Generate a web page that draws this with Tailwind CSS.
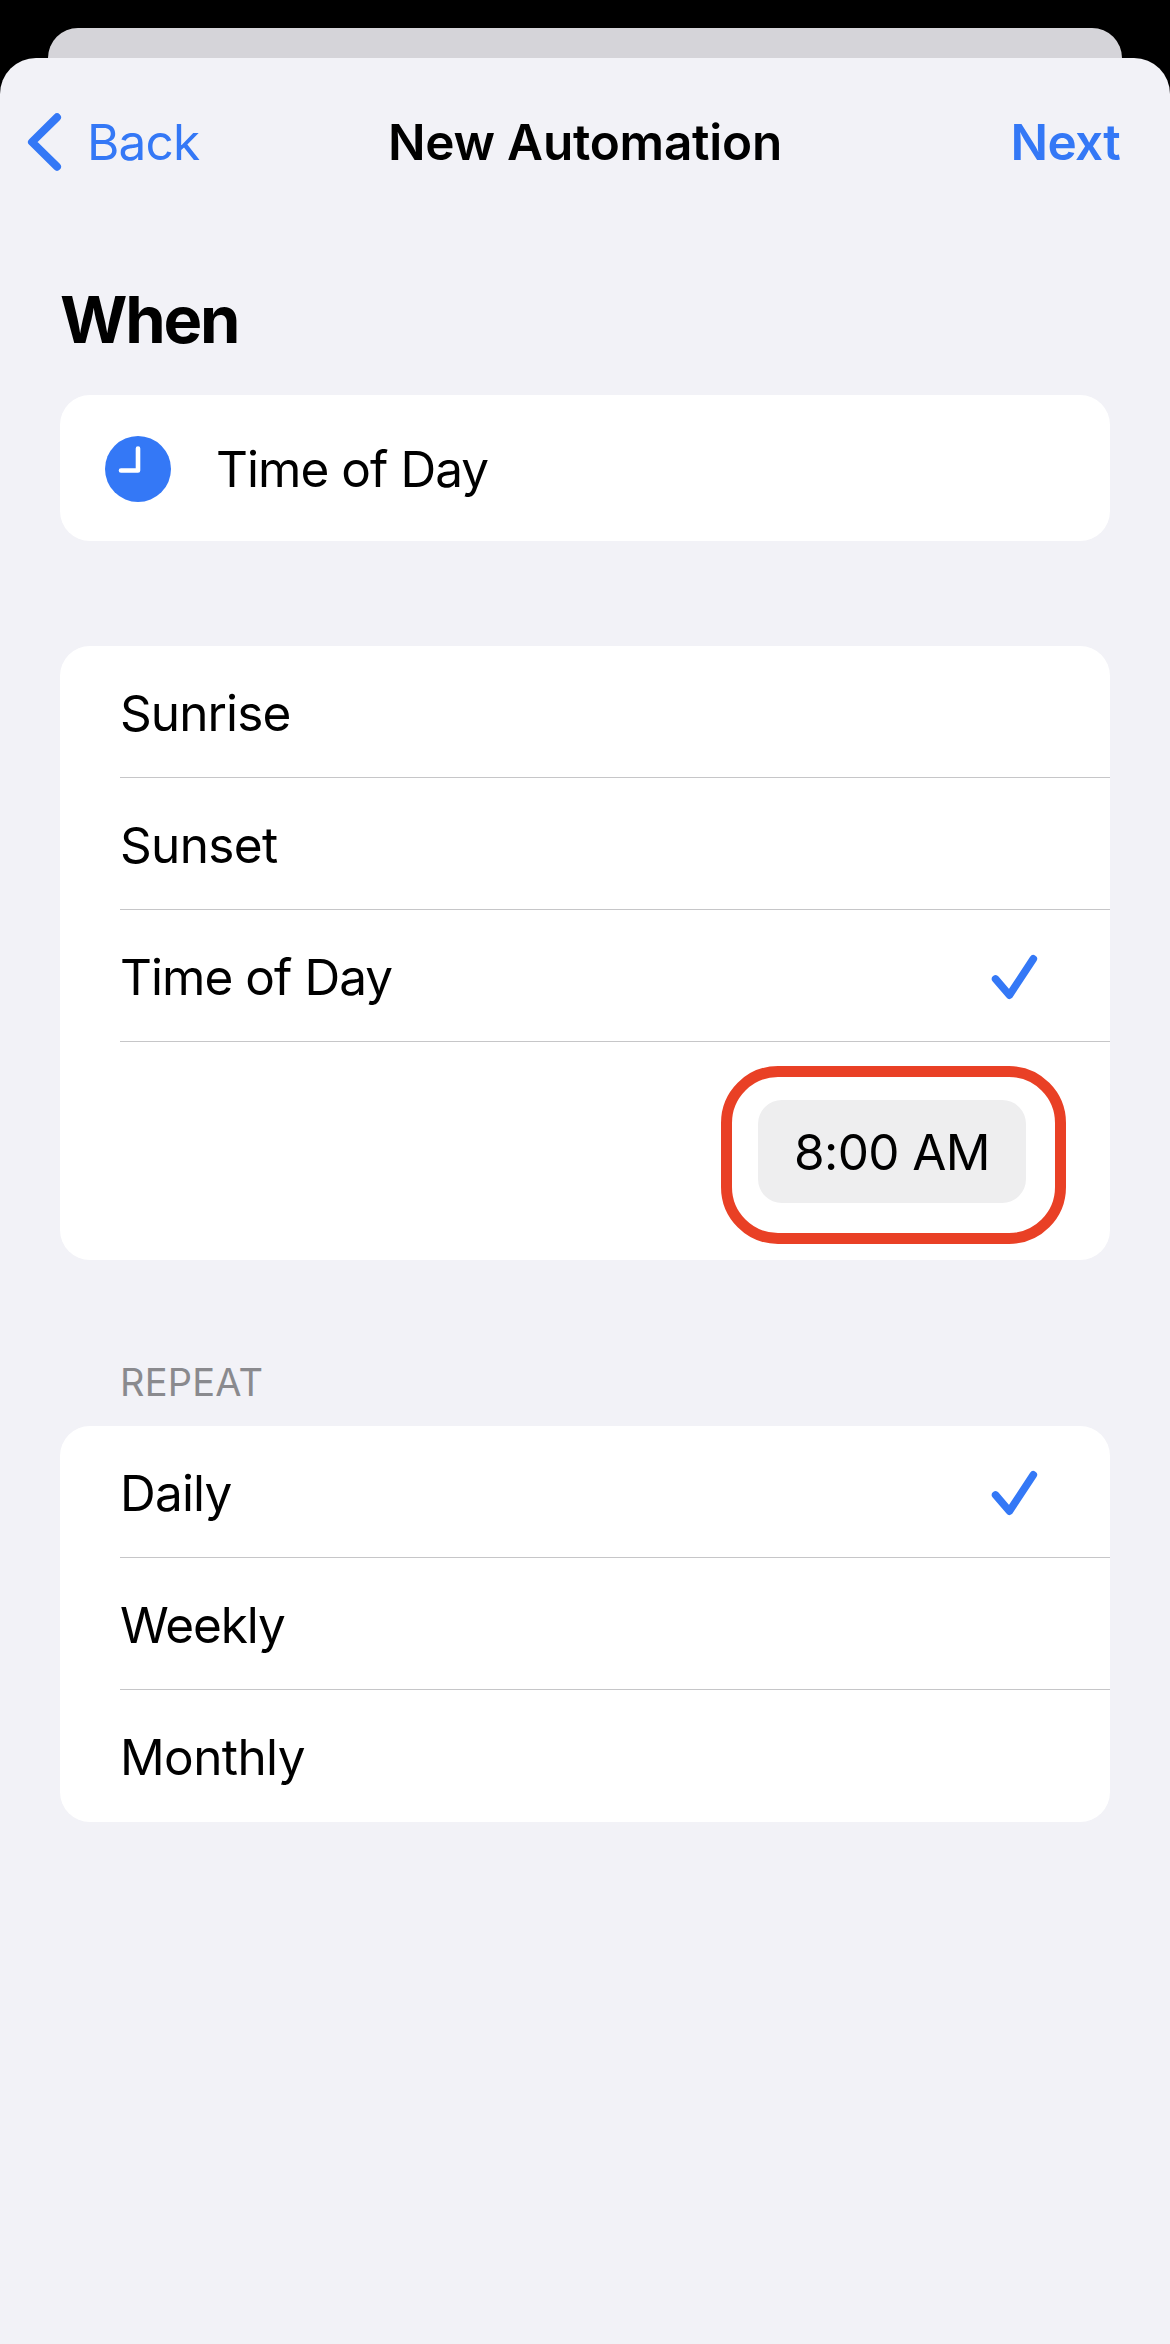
<!DOCTYPE html>
<html lang="en">
<head>
<meta charset="utf-8">
<title>New Automation</title>
<script src="https://cdn.jsdelivr.net/npm/@tailwindcss/browser@4"></script>
</head>
<body class="bg-black font-['Inter',sans-serif] text-[49.5px] leading-[60px] text-black">
<div class="flex h-[2344px] w-[1170px] flex-col overflow-hidden pt-7">
  <!-- Sheet stacked behind -->
  <div class="mx-12 h-[30px] shrink-0 rounded-t-[30px] bg-[#d5d4d9]"></div>

  <div class="flex grow flex-col rounded-t-[36px] bg-[#f2f2f7]">
    <header class="grid h-[168px] grid-cols-[1fr_auto_1fr] items-center text-[#3478f6]">
      <a class="flex items-center pl-[27px]">
        <svg class="h-[60px] w-[36px]" viewBox="0 0 36 60" fill="none" stroke="currentColor" stroke-width="8" stroke-linecap="round" stroke-linejoin="round"><path d="M30 5.3 5 30 30 54.7"/></svg>
        <span class="pl-6 tracking-[-0.8px]">Back</span>
      </a>
      <h1 class="font-semibold tracking-[-0.24px] text-black">New Automation</h1>
      <a class="justify-self-end pr-[50px] font-semibold tracking-[-0.7px]">Next</a>
    </header>

    <main class="px-[60px]">
      <h2 class="flex h-[169px] items-center pt-[18px] text-[65px] font-bold tracking-[-2.2px]">When</h2>
      <div class="flex h-[146px] items-center rounded-[30px] bg-white pt-0.5 pl-[45px]">
        <svg class="size-[66px]" viewBox="0 0 66 66" fill="none"><circle cx="33" cy="33" r="33" fill="#3478f6"/><path d="M33 12.5V34.5H16" stroke="#fff" stroke-width="4.6" stroke-linecap="round" stroke-linejoin="round"/></svg>
        <span class="pl-[45px] tracking-[-0.95px]">Time of Day</span>
      </div>

      <ul class="mt-[105px] rounded-[30px] bg-white pl-[60px]">
        <li class="flex h-[132px] items-center border-b border-[#c6c6c8] pt-0.5 tracking-[-0.9px]">Sunrise</li>
        <li class="flex h-[132px] items-center border-b border-[#c6c6c8] pt-0.5 tracking-[-0.65px]">Sunset</li>
        <li class="flex h-[132px] items-center justify-between border-b border-[#c6c6c8] pt-0.5 pr-[72px] tracking-[-0.95px]">Time of Day
          <svg class="h-[46px] w-[48px]" viewBox="0 0 48 46" fill="none" stroke="#3478f6" stroke-width="7.6" stroke-linecap="round" stroke-linejoin="round"><path d="M5.6 25 19.4 41.1 43.3 4.8"/></svg>
        </li>
        <li class="flex h-[218px] items-center justify-end pt-px pr-[84px]">
          <div class="relative flex h-[103px] w-[268px] items-center justify-center rounded-[24px] bg-[#eeeeef] pt-px tracking-[-0.6px]">8:00 AM
            <!-- Highlight ring around the time picker -->
            <div class="absolute -top-[34px] -left-[37.5px] h-[177.5px] w-[345px] rounded-[57px] border-[11px] border-[#e94025]"></div>
          </div>
        </li>
      </ul>

      <h3 class="flex h-[166px] items-center pt-[78px] pl-[60px] text-[38px] tracking-[0.2px] text-[#8a8a8e]">REPEAT</h3>
      <ul class="rounded-[30px] bg-white pl-[60px]">
        <li class="flex h-[132px] items-center justify-between border-b border-[#c6c6c8] pt-0.5 pr-[72px] tracking-[-0.8px]">Daily
          <svg class="h-[46px] w-[48px]" viewBox="0 0 48 46" fill="none" stroke="#3478f6" stroke-width="7.6" stroke-linecap="round" stroke-linejoin="round"><path d="M5.6 25 19.4 41.1 43.3 4.8"/></svg>
        </li>
        <li class="flex h-[132px] items-center border-b border-[#c6c6c8] pt-0.5 tracking-[-1.1px]">Weekly</li>
        <li class="flex h-[132px] items-center pt-0.5 tracking-[-0.6px]">Monthly</li>
      </ul>
    </main>
  </div>
</div>
</body>
</html>
